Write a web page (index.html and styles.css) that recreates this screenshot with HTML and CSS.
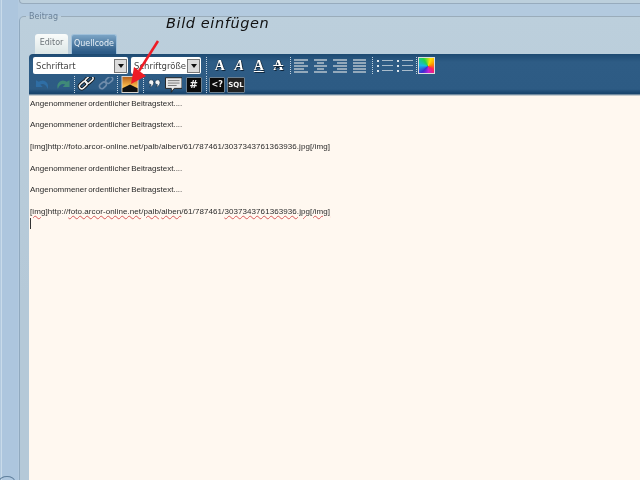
FILE: index.html
```html
<!DOCTYPE html>
<html lang="de">
<head>
<meta charset="utf-8">
<title>Beitrag</title>
<link rel="stylesheet" href="styles.css">
</head>
<body>
<div class="page">
  <div class="top-box"></div>
  <div class="fieldset">
    <div class="legend">Beitrag</div>
    <div class="tabs">
      <div class="tab">Editor</div>
      <div class="tab active">Quellcode</div>
    </div>
    <div class="toolbar">
      <div class="row row-one">
        <div class="select font"><span>Schriftart</span><i class="drop"></i></div>
        <div class="select size"><span>Schriftgröße</span><i class="drop"></i></div>
        <b class="sep first"></b>
        <span class="glyph serif">A</span>
        <span class="glyph serif ital">A</span>
        <span class="glyph serif under">A</span>
        <span class="glyph serif strike">A</span>
        <b class="sep"></b>
        <div class="align"><i></i><i class="s"></i><i></i><i class="s"></i><i></i></div>
        <div class="align center"><i></i><i class="s"></i><i></i><i class="s"></i><i></i></div>
        <div class="align right"><i></i><i class="s"></i><i></i><i class="s"></i><i></i></div>
        <div class="align"><i></i><i></i><i></i><i></i><i></i></div>
        <b class="sep"></b>
        <div class="list"><i></i><i></i><i></i></div>
        <div class="list num"><i></i><i></i><i></i></div>
        <b class="sep"></b>
        <div class="colour"></div>
      </div>
      <div class="row row-two">
        <svg class="icon" viewBox="0 0 18 16"><path d="M2 3v7h7L6.500 7.500C9 6 12.500 7 14 12c2-5-2-9-6-8.500-1 .1-2 .5-3 1.200z" fill="#2f6ea5"/></svg>
        <svg class="icon" viewBox="0 0 18 16"><path d="M16 3v7H9l2.500-2.500C9 6 5.500 7 4 12 2 7 6 3 10 3.500c1 .1 2 .5 3 1.200z" fill="#3f8a78"/></svg>
        <b class="sep"></b>
        <svg class="icon" viewBox="0 0 18 16"><g fill="none"><g stroke="#111" stroke-width="3.200"><rect x="1.500" y="-2.500" width="9" height="5" rx="2.500" transform="translate(2 12) rotate(-42)"/><rect x="1.500" y="-2.500" width="9" height="5" rx="2.500" transform="translate(8 6.500) rotate(-42)"/></g><g stroke="#f2f2f2" stroke-width="1.500"><rect x="1.500" y="-2.500" width="9" height="5" rx="2.500" transform="translate(2 12) rotate(-42)"/><rect x="1.500" y="-2.500" width="9" height="5" rx="2.500" transform="translate(8 6.500) rotate(-42)"/></g></g></svg>
        <svg class="icon" viewBox="0 0 18 16"><g fill="none" stroke="#6f8cab" stroke-width="1.700"><rect x="1.500" y="-2.500" width="8" height="5" rx="2.500" transform="translate(2 12) rotate(-42)"/><rect x="1.500" y="-2.500" width="8" height="5" rx="2.500" transform="translate(8.500 6.500) rotate(-42)"/></g></svg>
        <b class="sep"></b>
        <svg class="picture" viewBox="0 0 18 18"><defs><linearGradient id="sky" x1="0" y1="0" x2="0" y2="1"><stop offset="0" stop-color="#b8601a"/><stop offset=".6" stop-color="#f7b84a"/></linearGradient></defs><rect width="18" height="18" fill="#d8d8d8"/><rect x="1" y="1" width="16" height="16" fill="url(#sky)"/><path d="M1 17v-4l8-4 8 4v4z" fill="#111"/></svg>
        <b class="sep"></b>
        <svg class="icon" viewBox="0 0 18 16"><path d="M3.500 3.500a2.600 2.600 0 0 1 4.500 1.800c0 2.700-2 4.300-4.300 4.900 1-1.100 1.500-1.800 1.500-2.700A2.300 2.300 0 0 1 3.500 3.500zM10 3.500a2.600 2.600 0 0 1 4.500 1.800c0 2.700-2 4.300-4.300 4.900 1-1.100 1.500-1.800 1.500-2.700A2.300 2.300 0 0 1 10 3.500z" fill="#f4f4f4" stroke="#0e2438" stroke-width=".6"/></svg>
        <svg class="icon comment" viewBox="0 0 18 16"><path d="M.5 .5h17v11h-8l-3 4v-4H.5z" fill="#e8e8e8" stroke="#222"/><path d="M3 3.500h12M3 6h12M3 8.500h9" stroke="#777"/></svg>
        <span class="code hash">#</span>
        <b class="sep"></b>
        <span class="code">&lt;?</span>
        <span class="code sql">SQL</span>
      </div>
    </div>
    <div class="editor">
      <p>Angenommener ordentlicher Beitragstext....</p>
      <p>&nbsp;</p>
      <p>Angenommener ordentlicher Beitragstext....</p>
      <p>&nbsp;</p>
      <p class="url">[img]http://foto.arcor-online.net/palb/alben/61/787461/3037343761363936.jpg[/img]</p>
      <p>&nbsp;</p>
      <p>Angenommener ordentlicher Beitragstext....</p>
      <p>&nbsp;</p>
      <p>Angenommener ordentlicher Beitragstext....</p>
      <p>&nbsp;</p>
      <p class="url"><span class="spell">[img]</span>http://<span class="spell">foto.arcor-online.net</span>/<span class="spell">palb</span>/<span class="spell">alben</span>/61/787461/<span class="spell">3037343761363936.jpg</span><span class="spell">[/img]</span></p>
      <i class="caret"></i>
    </div>
  </div>
  <div class="caption">Bild einfügen</div>
  <svg class="arrow" viewBox="0 0 60 60"><path d="M36 1L17 31" stroke="#ee1c25" stroke-width="2.500" fill="none"/><path d="M9 44l3-17 12 9z" fill="#ee1c25"/></svg>
  <div class="corner"></div>
</div>
</body>
</html>
```
FILE: styles.css
```css
* { box-sizing: border-box; }
html, body { margin: 0; padding: 0; }
body { width: 640px; height: 480px; overflow: hidden; font-family: "Liberation Sans", Arial, sans-serif; }

.page {
  position: relative;
  width: 640px;
  height: 480px;
  overflow: hidden;
  background: linear-gradient(90deg, #b3cadf 1px, #c9dbea 1px, #c9dbea 2px, #adc6de 2px, #adc6de 18px, #b3cadf 18px);
  padding: 0 0 0 20px;
  display: flex;
  flex-direction: column;
  filter: blur(.3px);
}
.top-box {
  height: 4px;
  margin-left: -1px;
  background: #bccfdc;
  border-left: 1px solid #97abbd;
  border-bottom: 1px solid #97abbd;
  border-bottom-left-radius: 4px;
  flex: none;
}
.fieldset {
  position: relative;
  flex: 1;
  margin: 12px 0 0 -1px;
  background: linear-gradient(#bccfdc, #b5c9d8 60%);
  border-left: 1px solid #90a9bf;
  border-top: 1px solid #9aacba;
  border-top-left-radius: 5px;
  padding: 17px 0 0 9px;
  display: flex;
  flex-direction: column;
  min-height: 0;
}
.legend {
  position: absolute;
  top: -6px;
  left: 6px;
  padding: 0 3px;
  background: linear-gradient(#b3cadf 50%, #bccfdc 50%);
  color: #6b8299;
  font-family: "DejaVu Sans", sans-serif;
  font-size: 8px;
  line-height: 11px;
}
.tabs { display: flex; gap: 3px; padding-left: 6px; height: 20px; flex: none; }
.tab {
  width: 33px;
  height: 20px;
  background: linear-gradient(#fafcfb, #dce6e6);
  border-radius: 3px 3px 0 0;
  color: #6c7479;
  font-family: "DejaVu Sans", sans-serif;
  font-size: 8px;
  line-height: 18px;
  text-align: center;
}
.tab.active {
  width: 46px;
  background: linear-gradient(#7ba4c5, #2c5b87 90%);
  border: 1px solid #9fc0da;
  border-bottom: 0;
  color: #e8f0f6;
  line-height: 17px;
}
.toolbar {
  flex: none;
  height: 42px;
  padding: 3px 0 0 4px;
  border-radius: 4px 0 0 0;
  background: linear-gradient(#1d4a72 0, #2e5c85 8px, #2d5b84 35px, #1a466e 39px, #1a466e 40px, #c7cdd0 41px);
  display: flex;
  flex-direction: column;
  gap: 2px;
}
.row { display: flex; align-items: center; height: 17px; flex: none; }
.select {
  height: 17px;
  background: #fff;
  border-radius: 2px;
  display: flex;
  align-items: center;
  justify-content: space-between;
  padding: 0 1px 0 3px;
  color: #444;
  font-family: "DejaVu Sans", sans-serif;
  font-size: 8.500px;
  overflow: hidden;
  white-space: nowrap;
}
.select.font { width: 95px; margin-right: 3px; }
.select.size { width: 70px; }
.select.size span { overflow: hidden; }
.drop {
  position: relative;
  flex: none;
  width: 13px;
  height: 14px;
  background: #dcdcdc;
  border: 1px solid #777;
}
.drop::after {
  content: "";
  position: absolute;
  left: 2.500px;
  top: 4px;
  border: 3px solid transparent;
  border-top: 4px solid #111;
  border-bottom: 0;
}
.sep {
  flex: none;
  width: 1px;
  height: 17px;
  margin: 0 1px 0 2px;
  border-left: 1px dotted #c3d3e0;
}
.sep.first { margin-left: 5px; margin-right: 3px; }
.glyph {
  flex: none;
  width: 19.500px;
  text-align: center;
  color: #fff;
  font-size: 14px;
  font-weight: 700;
  line-height: 17px;
  text-shadow: 0 0 1px #000, 1px 1px 0 #10283f;
}
.serif { font-family: "Liberation Serif", serif; }
.ital { font-style: italic; }
.under { text-decoration: underline; }
.strike { text-decoration: line-through; }
.align, .list {
  flex: none;
  width: 19.500px;
  height: 14px;
  padding: 0 4px 0 2px;
  display: flex;
  flex-direction: column;
  justify-content: space-between;
}
.align i { display: block; height: 2px; background: #93a9bb; }
.align i.s { margin-right: 4px; }
.align.center i.s { margin: 0 3px; }
.align.right i.s { margin: 0 0 0 4px; }
.list { height: 12px; padding: 0 1px 0 3px; width: 20px; }
.list i {
  display: block;
  height: 2px;
  border-left: 2px solid #dce5ec;
  background: linear-gradient(#a9bccb, #a9bccb) 3px 0 / 100% 1px no-repeat;
}
.colour {
  flex: none;
  width: 17px;
  height: 17px;
  border: 1px solid #ddd;
  background: conic-gradient(from 20deg at 60% 55%, #ffe000, #ff8a00, #ff1f5a, #c81fd8, #3a2fd0, #19b7e8, #22d34a, #ffe000);
}
.icon { flex: none; width: 19.500px; height: 16px; padding: 0 1px; }
.icon.comment { margin-left: -1px; margin-right: 1px; }
.picture { flex: none; width: 18px; height: 17px; margin: 0 2px 0 2px; }
.code {
  flex: none;
  width: 16px;
  height: 16px;
  margin: 0 1.750px;
  border: 1px solid #6b7f90;
  border-radius: 1px;
  background: #0a0a0a;
  color: #f2f2f2;
  font-family: "DejaVu Sans", sans-serif;
  font-size: 8px;
  font-weight: 700;
  line-height: 14px;
  text-align: center;
  white-space: nowrap;
}
.hash { font-size: 10px; }
.sql { font-size: 7px; width: 18px; margin-left: 0; background: #222; }
.editor {
  flex: 1;
  min-height: 0;
  background: #fff8f0;
  padding: 2.500px 0 0 1px;
  color: #2a2a2a;
  font-size: 8px;
  word-spacing: -1px;
  line-height: 10.850px;
  white-space: nowrap;
}
.editor p { margin: 0; }
.editor .url { letter-spacing: .08px; }
.spell {
  text-decoration: underline wavy #d85a5a 1px;
  text-underline-offset: 1px;
}
.caret { display: block; width: 1px; height: 11px; background: #333; }
.caption {
  position: absolute;
  left: 166px;
  top: 14px;
  color: #111;
  font-family: "DejaVu Sans", sans-serif;
  font-size: 14.500px;
  font-style: italic;
  letter-spacing: .6px;
  line-height: 18px;
  white-space: nowrap;
}
.arrow { position: absolute; left: 122px; top: 40px; width: 60px; height: 60px; }
.corner {
  position: absolute;
  left: -1px;
  top: 476px;
  width: 16px;
  height: 10px;
  border: 1px solid #5f7f9c;
  border-radius: 50%;
}
```
